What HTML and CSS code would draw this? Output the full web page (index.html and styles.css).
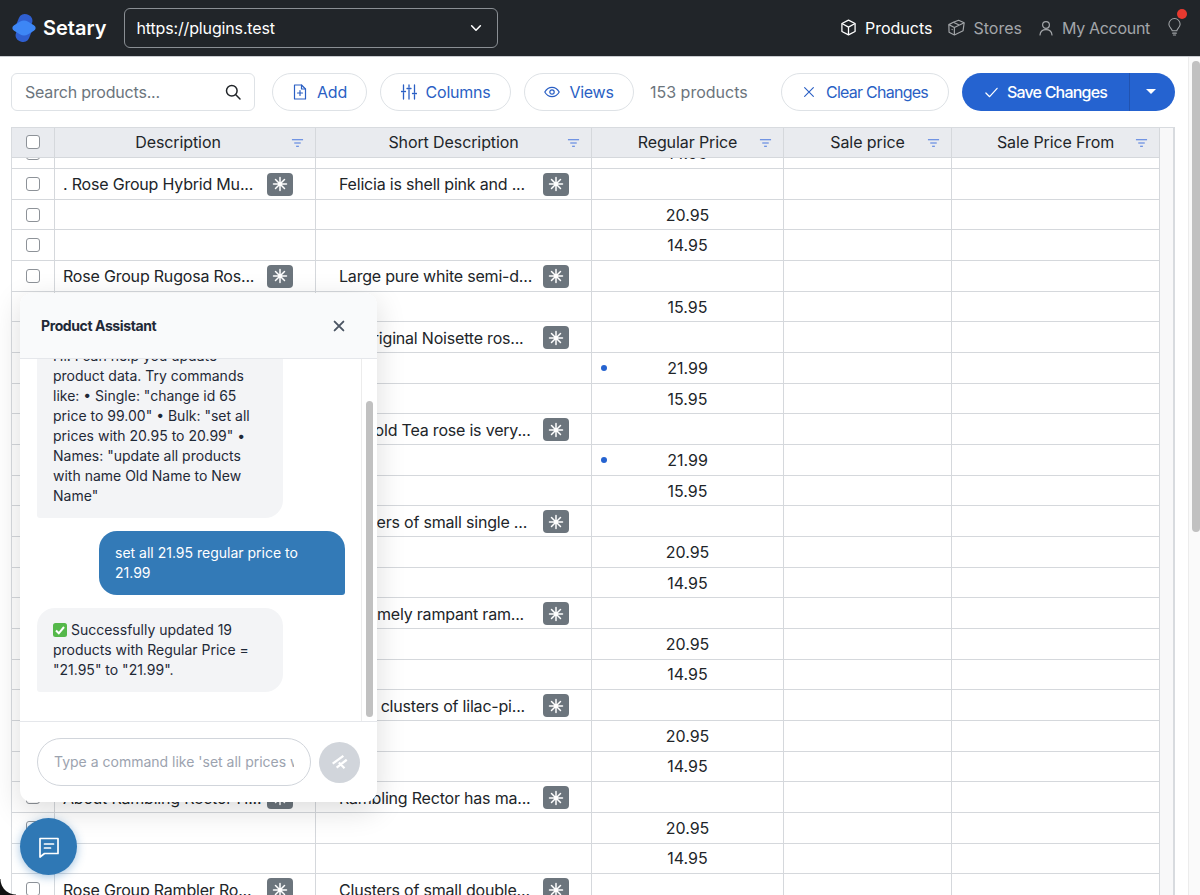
FILE: index.html
```html
<!DOCTYPE html>
<html lang="en">
<head>
    <meta charset="UTF-8">
    <meta name="viewport" content="width=device-width, initial-scale=1.0">
    <title>Setary</title>
    <link rel="stylesheet" href="styles.css">
</head>
<body>
    <header class="topbar">
        <div class="brand">
            <svg class="logo" viewBox="0 0 24 30" width="24" height="30">
                <rect x="5" y="1" width="14" height="20" rx="6" transform="rotate(22 12 11)" fill="#2f5fd0"/>
                <rect x="5" y="9" width="14" height="20" rx="6" transform="rotate(22 12 19)" fill="#2f5fd0"/>
                <rect width="20" height="20" rx="6" transform="translate(12 15) scale(1 .62) rotate(45) translate(-10 -10)" fill="#3d86f5"/>
            </svg>
            <span>Setary</span>
        </div>
        <div class="store-select">
            <span>https://plugins.test</span>
            <svg viewBox="0 0 16 16" width="14" height="14" fill="none" stroke="#fff" stroke-width="1.8" stroke-linecap="round" stroke-linejoin="round"><path d="M3 5.5l5 5 5-5"/></svg>
        </div>
        <nav class="nav">
            <a class="nav-link active">
                <svg viewBox="0 0 16 16" width="17" height="17" fill="none" stroke="currentColor" stroke-width="1.2" stroke-linejoin="round"><path d="M8 1l6.2 3.2v7.6L8 15l-6.2-3.2V4.2z"/><path d="M1.8 4.2L8 7.6l6.2-3.4M8 7.6V15"/></svg>
                Products
            </a>
            <a class="nav-link">
                <svg viewBox="0 0 16 16" width="17" height="17" fill="none" stroke="currentColor" stroke-width="1.1" stroke-linejoin="round"><path d="M5 3l5-1.8 5.2 2.3-1 7.5L6 15 1 12.4.8 5.3z"/><path d="M.8 5.3L6 8l9.2-4.5M6 8v7M5 3l5.5 2.6M3.4 9.6l1 .5"/></svg>
                Stores
            </a>
            <a class="nav-link account">
                <svg viewBox="0 0 16 16" width="16" height="16" fill="none" stroke="currentColor" stroke-width="1.2" stroke-linecap="round"><circle cx="8" cy="5" r="3.4"/><path d="M2 15c.3-3.6 2.7-5.4 6-5.4s5.7 1.8 6 5.4"/></svg>
                My Account
            </a>
            <span class="tip">
                <svg viewBox="0 0 16 20" width="15" height="19" fill="none" stroke="currentColor" stroke-width="1.1" stroke-linecap="round"><path d="M5.5 13.5c0-2-3.5-3.5-3.500-7a6 6 0 0 1 12 0c0 3.500-3.500 5-3.500 7z"/><path d="M6 16h4M6.800 18h2.400"/></svg>
                <i class="tip-dot"></i>
            </span>
        </nav>
    </header>

    <div class="page">
        <main class="content">
            <div class="toolbar">
                <div class="search">
                    <span>Search products...</span>
                    <svg viewBox="0 0 16 16" width="16" height="16" fill="none" stroke="#212529" stroke-width="1.500" stroke-linecap="round"><circle cx="6.800" cy="6.800" r="5.300"/><path d="M10.800 10.800l4.200 4.200"/></svg>
                </div>
                <button class="btn btn-add">
                    <svg viewBox="0 0 16 16" width="16" height="16" fill="none" stroke="currentColor" stroke-width="1.200" stroke-linejoin="round" stroke-linecap="round"><path d="M2.500 1h7L13.500 5v10h-11z"/><path d="M9.500 1v4h4M8 6.500v5M5.500 9h5"/></svg>
                    Add
                </button>
                <button class="btn btn-columns">
                    <svg viewBox="0 0 16 16" width="16" height="16" fill="none" stroke="currentColor" stroke-width="1.300" stroke-linecap="round"><path d="M2.500 1v5M2.500 9v6M8 1v2M8 6v9M13.500 1v7M13.500 11v4M.5 7.500h4M6 4.500h4M11.500 9.500h4"/></svg>
                    Columns
                </button>
                <button class="btn btn-views">
                    <svg viewBox="0 0 16 16" width="16" height="16" fill="none" stroke="currentColor" stroke-width="1.200"><path d="M.8 8C2.500 5 5 3.300 8 3.300S13.500 5 15.200 8c-1.700 3-4.200 4.700-7.200 4.700S2.500 11 .8 8z"/><circle cx="8" cy="8" r="2.200"/></svg>
                    Views
                </button>
                <span class="count">153 products</span>
                <button class="btn btn-clear">
                    <svg viewBox="0 0 16 16" width="14" height="14" fill="none" stroke="currentColor" stroke-width="1.300" stroke-linecap="round"><path d="M3 3l10 10M13 3L3 13"/></svg>
                    Clear Changes
                </button>
                <div class="save-group">
                    <button class="save-main">
                        <svg viewBox="0 0 16 16" width="15" height="15" fill="none" stroke="#fff" stroke-width="1.300" stroke-linecap="round" stroke-linejoin="round"><path d="M2 8.500l4 4 8-9"/></svg>
                        Save Changes
                    </button>
                    <button class="save-caret"><i></i></button>
                </div>
            </div>

            <div class="table">
                <div class="row head">
                    <div class="cell check"><span class="box"></span></div>
                    <div class="cell first">Description<svg class="filter" viewBox="0 0 14 10" width="13" height="10"><path d="M1 1.500h12M3.500 5h7M5.500 8.500h3" stroke="#4a78e0" stroke-width="1.300" fill="none"/></svg></div>
                    <div class="cell">Short Description<svg class="filter" viewBox="0 0 14 10" width="13" height="10"><path d="M1 1.500h12M3.500 5h7M5.500 8.500h3" stroke="#4a78e0" stroke-width="1.300" fill="none"/></svg></div>
                    <div class="cell">Regular Price<svg class="filter" viewBox="0 0 14 10" width="13" height="10"><path d="M1 1.500h12M3.500 5h7M5.500 8.500h3" stroke="#4a78e0" stroke-width="1.300" fill="none"/></svg></div>
                    <div class="cell">Sale price<svg class="filter" viewBox="0 0 14 10" width="13" height="10"><path d="M1 1.500h12M3.500 5h7M5.500 8.500h3" stroke="#4a78e0" stroke-width="1.300" fill="none"/></svg></div>
                    <div class="cell">Sale Price From<svg class="filter" viewBox="0 0 14 10" width="13" height="10"><path d="M1 1.500h12M3.500 5h7M5.500 8.500h3" stroke="#4a78e0" stroke-width="1.300" fill="none"/></svg></div>
                </div>
                <div class="rows" id="rows"></div>
            </div>
        </main>
        <div class="page-scroll"><div class="page-thumb"></div></div>
    </div>

    <section class="chat">
        <div class="chat-head">
            <strong>Product Assistant</strong>
            <svg viewBox="0 0 16 16" width="14" height="14" fill="none" stroke="#4b5563" stroke-width="2.200" stroke-linecap="round"><path d="M3 3l10 10M13 3L3 13"/></svg>
        </div>
        <div class="chat-body">
            <div class="messages">
                <div class="msg bot">Hi! I can help you update product data. Try commands like: • Single: "change id 65 price to 99.00" • Bulk: "set all prices with 20.95 to 20.99" • Names: "update all products with name Old Name to New Name"</div>
                <div class="msg user">set all 21.95 regular price to 21.99</div>
                <div class="msg bot"><svg class="ok" viewBox="0 0 14 14" width="14" height="14"><rect width="14" height="14" rx="2.500" fill="#55b84a"/><path d="M3 7.500l2.800 2.800L11 4" stroke="#fff" stroke-width="2" fill="none"/></svg> Successfully updated 19 products with Regular Price = "21.95" to "21.99".</div>
            </div>
            <div class="chat-scroll"><div class="chat-thumb"></div></div>
        </div>
        <div class="chat-foot">
            <input class="chat-input" type="text" placeholder="Type a command like 'set all prices with 20.95 to 20.99'">
            <button class="send">
                <svg viewBox="0 0 16 16" width="18" height="18" fill="none" stroke="#fff" stroke-width="2"><path d="M1.500 9.500L11 2.500M5 13L14 6M7 8.500l5 5"/></svg>
            </button>
        </div>
    </section>

    <button class="fab">
        <svg viewBox="0 0 24 24" width="24" height="24" fill="none" stroke="#fff" stroke-width="1.700" stroke-linejoin="round" stroke-linecap="round"><path d="M3 3.500h18v15H7.500L3 22z"/><path d="M7.500 9h9M7.500 13h6"/></svg>
    </button>
    <div class="corner"></div>

    <script>
        // desc, short, price, changed
        const data = [
            ['', '', '14.95'],
            ['. Rose Group Hybrid Mu...', 'Felicia is shell pink and ...', ''],
            ['', '', '20.95'],
            ['', '', '14.95'],
            ['Rose Group Rugosa Ros...', 'Large pure white semi-d...', ''],
            ['', '', '15.95'],
            ['Rose Group Noisette Ro...', 'An original Noisette ros...', ''],
            ['', '', '21.99', true],
            ['', '', '15.95'],
            ['Rose Group Tea Rose H...', 'This old Tea rose is very...', ''],
            ['', '', '21.99', true],
            ['', '', '15.95'],
            ['Rose Group Rambler Ro...', 'Clusters of small single ...', ''],
            ['', '', '20.95'],
            ['', '', '14.95'],
            ['Rose Group Rambler Ro...', 'Extremely rampant ram...', ''],
            ['', '', '20.95'],
            ['', '', '14.95'],
            ['Rose Group Rambler Ro...', 'Buds clusters of lilac-pi...', ''],
            ['', '', '20.95'],
            ['', '', '14.95'],
            ['About Rambling Rector H...', 'Rambling Rector has ma...', ''],
            ['', '', '20.95'],
            ['', '', '14.95'],
            ['Rose Group Rambler Ro...', 'Clusters of small double...', '']
        ];

        const star = '<span class="ai"><svg viewBox="0 0 16 16" width="16" height="16" stroke="#fff" stroke-width="1.500" stroke-linecap="round"><path d="M8 1.500v13M1.500 8h13M3.500 3.500l9 9M12.500 3.500l-9 9"/></svg></span>';

        function textCell(text) {
            if (!text) return '<div class="cell text"></div>';
            return `<div class="cell text"><span class="clip">${text}</span>${star}</div>`;
        }

        document.getElementById('rows').innerHTML = data.map((r) => `
            <div class="row">
                <div class="cell check"><span class="box"></span></div>
                ${textCell(r[0])}
                ${textCell(r[1])}
                <div class="cell price">${r[3] ? '<i class="dirty"></i>' : ''}${r[2]}</div>
                <div class="cell"></div>
                <div class="cell"></div>
            </div>`).join('');
    </script>
</body>
</html>
```

FILE: styles.css
```css
* {
    box-sizing: border-box;
}

body {
    margin: 0;
    height: 895px;
    overflow: hidden;
    background-color: #fff;
    color: #212529;
    font-family: Inter, "Noto Sans", Arial, sans-serif;
    font-size: 16px;
}

button {
    font-family: inherit;
}

/* Top bar */
.topbar {
    display: flex;
    align-items: center;
    height: 57px;
    padding: 0 18px 1px 12px;
    background-color: #212529;
    border-bottom: 1px solid #c9ccd0;
    color: #fff;
}

.brand {
    display: flex;
    align-items: center;
    gap: 7px;
    font-size: 20px;
    font-weight: 600;
}

.store-select {
    display: flex;
    align-items: center;
    justify-content: space-between;
    width: 374px;
    height: 40px;
    margin-left: 17px;
    padding: 0 14px 0 12px;
    border: 1px solid #8a8f94;
    border-radius: 6px;
    letter-spacing: -0.15px;
}

.nav {
    display: flex;
    align-items: center;
    margin-left: auto;
}

.nav-link {
    display: flex;
    align-items: center;
    gap: 8px;
    margin-left: 16px;
    color: #a3a6a9;
}

.nav-link.active {
    color: #fff;
}

.account {
    letter-spacing: -0.3px;
}

.tip {
    position: relative;
    display: flex;
    margin-left: 17px;
    color: #a3a6a9;
}

.tip-dot {
    position: absolute;
    top: -9px;
    right: -5px;
    width: 10px;
    height: 10px;
    border-radius: 50%;
    background-color: #e8392f;
}

/* Page */
.page {
    display: flex;
    height: 838px;
}

.content {
    flex: 1;
    min-width: 0;
    padding: 16px 13px 0 11px;
}

.page-scroll {
    width: 12px;
    padding: 4px 0 0 3px;
    background-color: #fafafa;
    border-left: 1px solid #ececec;
}

.page-thumb {
    height: 471px;
    border-radius: 4px;
    background-color: #c1c1c1;
}

/* Toolbar */
.toolbar {
    display: flex;
    align-items: center;
    height: 38px;
}

.search {
    display: flex;
    align-items: center;
    justify-content: space-between;
    width: 244px;
    height: 38px;
    padding: 0 13px;
    border: 1px solid #dee2e6;
    border-radius: 6px;
    color: #6c757d;
    letter-spacing: -0.2px;
}

.btn {
    display: flex;
    align-items: center;
    justify-content: center;
    gap: 9px;
    height: 38px;
    padding: 0;
    border: 1px solid #dee2e6;
    border-radius: 19px;
    background-color: #fff;
    color: #2a5fc4;
    font-size: 16px;
    letter-spacing: -0.25px;
}

.btn-add {
    width: 95px;
    margin-left: 17px;
}

.btn-columns {
    width: 131px;
    margin-left: 13px;
}

.btn-views {
    width: 110px;
    margin-left: 13px;
}

.count {
    margin-left: 16px;
    color: #6c757d;
}

.btn-clear {
    width: 168px;
    margin-left: auto;
    gap: 10px;
    letter-spacing: -0.75px;
}

.save-group {
    display: flex;
    width: 213px;
    height: 38px;
    margin-left: 13px;
    border-radius: 19px;
    overflow: hidden;
    background-color: #2563d0;
}

.save-main {
    display: flex;
    align-items: center;
    justify-content: center;
    gap: 8px;
    width: 168px;
    padding: 0;
    border: 0;
    border-right: 1px solid #2153b0;
    background: none;
    color: #fff;
    font-size: 16px;
    font-weight: 500;
    letter-spacing: -0.8px;
}

.save-caret {
    display: flex;
    align-items: center;
    justify-content: center;
    flex: 1;
    padding: 0 3px 2px 0;
    border: 0;
    background: none;
}

.save-caret i {
    border-top: 5px solid #fff;
    border-left: 5px solid transparent;
    border-right: 5px solid transparent;
}

/* Table */
.table {
    height: 784px;
    margin-top: 16px;
    border: 1px solid #d8dbdf;
    border-right: 2px solid #d8dbdf;
    border-bottom: 0;
    overflow: hidden;
    background-color: #f8f8f9;
}

.row {
    display: grid;
    grid-template-columns: 43px 261px 276px 192px 168px 208px;
    width: 1148px;
    height: 30.67px;
    border-bottom: 1px solid #d5d8dc;
    background-color: #fff;
}

.cell {
    position: relative;
    display: flex;
    align-items: center;
    justify-content: center;
    border-right: 1px solid #d5d8dc;
    white-space: nowrap;
}

.head {
    position: relative;
    z-index: 1;
    height: 30px;
    letter-spacing: -0.1px;
}

.head .cell {
    padding-bottom: 2px;
    background-color: #e9ebef;
}

.head .first {
    padding-right: 14px;
}

.filter {
    position: absolute;
    top: 10px;
    right: 11px;
}

.rows {
    margin-top: -19.5px;
}

.box {
    width: 14px;
    height: 14px;
    border: 1px solid #8d9298;
    border-radius: 3px;
    background-color: #fff;
}

.text {
    justify-content: space-between;
    padding: 1px 22px 0 8px;
    letter-spacing: -0.2px;
}

.text:nth-child(3) {
    padding-left: 23px;
}

.ai {
    display: flex;
    align-items: center;
    justify-content: center;
    width: 26px;
    height: 23px;
    border-radius: 4px;
    background-color: #6c757d;
}

.clip {
    overflow: hidden;
}

.dirty {
    position: absolute;
    top: 12px;
    left: 9px;
    width: 6px;
    height: 6px;
    border-radius: 50%;
    background-color: #2563d0;
}

/* Chat panel */
.chat {
    position: absolute;
    top: 293px;
    left: 20px;
    display: flex;
    flex-direction: column;
    width: 357px;
    height: 509px;
    border-radius: 12px;
    overflow: hidden;
    background-color: #fff;
    box-shadow: 0 8px 30px rgba(0, 0, 0, 0.14);
    z-index: 5;
}

.chat-head {
    display: flex;
    align-items: center;
    justify-content: space-between;
    height: 66px;
    padding: 0 31px 0 21px;
    background-color: #f9fafb;
    border-bottom: 1px solid #e5e7eb;
    color: #1f2937;
    font-size: 14px;
    letter-spacing: -0.4px;
}

.chat-body {
    display: flex;
    flex: 1;
    min-height: 0;
    overflow: hidden;
}

.messages {
    display: flex;
    flex-direction: column;
    align-items: flex-start;
    flex: 1;
    gap: 13px;
    margin-top: -25px;
    padding: 0 16px 0 17px;
}

.msg {
    width: 246px;
    padding: 12px 16px;
    border-radius: 18px 18px 18px 3px;
    background-color: #f3f4f6;
    color: #1f2937;
    font-size: 14px;
    line-height: 20px;
}

.msg.user {
    align-self: flex-end;
    border-radius: 18px 18px 3px 18px;
    background-color: #337ab7;
    color: #fff;
}

.ok {
    vertical-align: -2px;
}

.chat-scroll {
    width: 16px;
    padding: 42px 4px 4px;
    border-left: 1px solid #ececec;
}

.chat-thumb {
    height: 316px;
    border-radius: 4px;
    background-color: #c1c1c1;
}

.chat-foot {
    display: flex;
    align-items: center;
    gap: 8px;
    height: 81px;
    padding: 0 17px;
    border-top: 1px solid #e5e7eb;
}

.chat-input {
    width: 274px;
    height: 48px;
    padding: 0 16px 2px;
    border: 1px solid #d1d5db;
    border-radius: 24px;
    font-family: inherit;
    font-size: 14px;
}

.chat-input::placeholder {
    color: #9ca3af;
}

.send {
    display: flex;
    align-items: center;
    justify-content: center;
    width: 41px;
    height: 41px;
    padding: 0;
    border: 0;
    border-radius: 50%;
    background-color: #d1d5db;
}

.fab {
    position: absolute;
    top: 818px;
    left: 20px;
    display: flex;
    align-items: center;
    justify-content: center;
    width: 57px;
    height: 57px;
    padding: 0;
    border: 0;
    border-radius: 50%;
    background-color: #2f78b5;
    box-shadow: 0 2px 10px rgba(51, 122, 183, 0.45);
    z-index: 6;
}

/* window corner of the capture */
.corner {
    position: absolute;
    left: 0;
    top: 879px;
    width: 16px;
    height: 16px;
    background: radial-gradient(circle at 100% 0, transparent 15px, #111 16px);
    z-index: 7;
}
```
